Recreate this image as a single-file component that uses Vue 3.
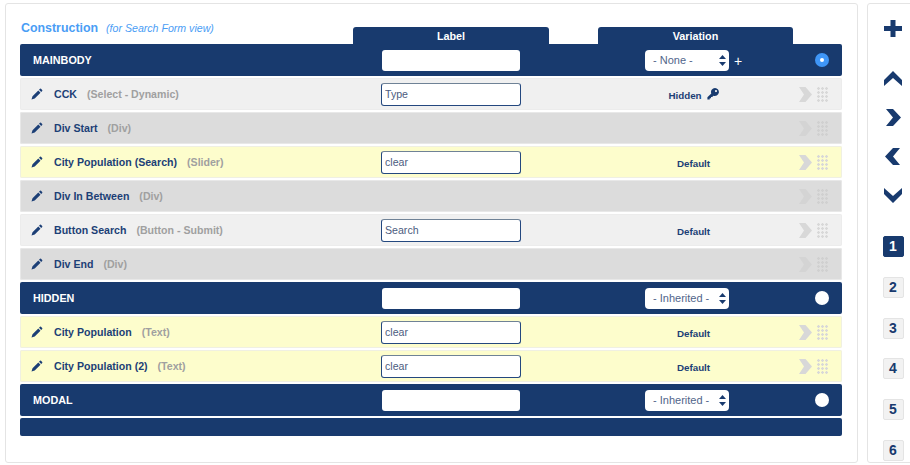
<script setup>
const rows = [
  { type: 'pos', name: 'MAINBODY', select: '- None -', plus: true, active: true },
  { type: 'item', tone: 'grey', name: 'CCK', kind: '(Select - Dynamic)', label: 'Type', variation: 'Hidden', key: true },
  { type: 'item', tone: 'div', name: 'Div Start', kind: '(Div)' },
  { type: 'item', tone: 'yellow', name: 'City Population (Search)', kind: '(Slider)', label: 'clear', variation: 'Default' },
  { type: 'item', tone: 'div', name: 'Div In Between', kind: '(Div)' },
  { type: 'item', tone: 'grey', name: 'Button Search', kind: '(Button - Submit)', label: 'Search', variation: 'Default' },
  { type: 'item', tone: 'div', name: 'Div End', kind: '(Div)' },
  { type: 'pos', name: 'HIDDEN', select: '- Inherited -' },
  { type: 'item', tone: 'yellow', name: 'City Population', kind: '(Text)', label: 'clear', variation: 'Default' },
  { type: 'item', tone: 'yellow', name: 'City Population (2)', kind: '(Text)', label: 'clear', variation: 'Default' },
  { type: 'pos', name: 'MODAL', select: '- Inherited -' }
]
const pages = [1, 2, 3, 4, 5, 6]
</script>

<template>
  <div class="page">
    <section class="panel">
      <header class="head">
        <div class="title"><strong>Construction</strong><em>(for Search Form view)</em></div>
        <div class="tab">Label</div>
        <div></div>
        <div class="tab">Variation</div>
      </header>
      <div class="list">
        <template v-for="row in rows" :key="row.name">
          <div v-if="row.type === 'pos'" class="row pos">
            <div class="pos-name">{{ row.name }}</div>
            <input class="blank" type="text" />
            <div></div>
            <div class="sel-cell">
              <div class="select">
                <span>{{ row.select }}</span>
                <svg width="7" height="11" viewBox="0 0 7 11"><path d="M3.5 0L7 4H0zM3.5 11L0 7h7z" fill="#183a6e" /></svg>
              </div>
              <span v-if="row.plus" class="plus">+</span>
            </div>
            <div class="end">
              <span class="radio" :class="{ on: row.active }"></span>
            </div>
          </div>
          <div v-else class="row item" :class="row.tone">
            <div class="name">
              <svg class="pencil" width="12" height="12" viewBox="0 0 12 12">
                <path d="M.5 11.500L1.500 8.300 7.300 2.500 9.500 4.700 3.700 10.500zM8 1.800L9 .8q.5-.4 1 0l1.200 1.200q.4.5 0 1L10.200 4z" fill="#1c3f76" />
              </svg>
              <b>{{ row.name }}</b><span>{{ row.kind }}</span>
            </div>
            <input v-if="row.label" class="field" type="text" :value="row.label" />
            <div v-else></div>
            <div></div>
            <div class="variation">
              <template v-if="row.variation">{{ row.variation }}</template>
              <svg v-if="row.key" class="key" width="12" height="12" viewBox="0 0 12 12">
                <path fill-rule="evenodd" d="M8 0a4 4 0 1 1-1.600 7.700L5.200 8.900H4v1.300H2.700v1.300H.4V9.300L4.300 5.500A4 4 0 0 1 8 0zm1 2a1.100 1.100 0 1 0 0 2.200A1.100 1.100 0 0 0 9 2z" fill="#183a6e" />
              </svg>
            </div>
            <div class="end tools">
              <svg class="chev" width="13" height="15" viewBox="0 0 13 15"><path d="M0 0h6.500L13 7.500 6.500 15H0l5-7.500z" /></svg>
              <i class="dots"></i>
            </div>
          </div>
        </template>
        <div class="foot"></div>
      </div>
    </section>

    <aside class="side">
      <svg class="add" width="18" height="17" viewBox="0 0 18 17"><path d="M6.500 0h5v6H18v5h-6.500v6h-5v-6H0V6h6.500z" fill="#183a6e" /></svg>
      <nav class="moves">
        <span class="move"><svg width="18" height="15" viewBox="0 0 18 15"><path d="M9 0l9 9v6L9 7l-9 8V9z" fill="#183a6e" /></svg></span>
        <span class="move"><svg width="16" height="17" viewBox="0 0 16 17"><path d="M1 0h7l8 8.500L8 17H1l7-8.500z" fill="#183a6e" /></svg></span>
        <span class="move"><svg width="16" height="17" viewBox="0 0 16 17"><path d="M15 0H8L0 8.500 8 17h7L8 8.500z" fill="#183a6e" /></svg></span>
        <span class="move"><svg width="18" height="15" viewBox="0 0 18 15"><path d="M0 0l9 8 9-8v6l-9 9-9-9z" fill="#183a6e" /></svg></span>
      </nav>
      <div class="pages">
        <span v-for="p in pages" :key="p" class="num" :class="{ current: p === 1 }">{{ p }}</span>
      </div>
    </aside>
  </div>
</template>

<style>
html, body { margin: 0; background: #fff; }
</style>

<style scoped>
.page {
  display: flex;
  align-items: flex-start;
  gap: 9px;
  width: 910px;
  height: 465px;
  padding: 3px 0 0 5px;
  box-sizing: border-box;
  overflow: hidden;
  font-family: "Liberation Sans", Arial, sans-serif;
  color: #183a6e;
}
.panel {
  flex: none;
  width: 853px;
  height: 460px;
  box-sizing: border-box;
  border: 1px solid #e4e4e4;
  border-radius: 3px;
  padding: 23px 14px 0;
}
.head {
  display: grid;
  grid-template-columns: 333px 196px 49px 195px;
  height: 17px;
}
.title {
  display: flex;
  align-items: baseline;
  gap: 8px;
  margin-top: -7px;
  padding-left: 1px;
  line-height: 16px;
  color: #4a9df5;
}
.title strong { font-size: 12.4px; font-weight: 700; }
.title em { font-size: 10.6px; }
.tab {
  background: #183a6e;
  color: #fff;
  border-radius: 3px 3px 0 0;
  font-size: 10.8px;
  font-weight: 700;
  line-height: 19px;
  text-align: center;
}
.list {
  display: flex;
  flex-direction: column;
  gap: 2px;
  width: 822px;
}
.row {
  display: grid;
  grid-template-columns: 361px 140px 77px 191px 53px;
  align-items: center;
  height: 32px;
  border-radius: 2px;
}
.pos { background: #183a6e; }
.pos-name {
  padding-left: 13px;
  color: #fff;
  font-size: 10.8px;
  font-weight: 700;
}
.blank {
  justify-self: center;
  width: 138px;
  height: 21px;
  box-sizing: border-box;
  border: 0;
  border-radius: 3px;
  background: #fff;
  padding: 0;
}
.sel-cell {
  display: flex;
  align-items: center;
  gap: 5px;
  padding-left: 47px;
}
.select {
  display: flex;
  align-items: center;
  justify-content: space-between;
  width: 84px;
  height: 21px;
  box-sizing: border-box;
  padding: 0 3px 0 8px;
  border-radius: 4px;
  background: #fff;
  color: #51658a;
  font-size: 11px;
}
.plus {
  color: #fff;
  font-size: 14px;
  line-height: 14px;
  margin-top: 2px;
}
.end {
  display: flex;
  align-items: center;
  justify-content: flex-end;
  padding-right: 13px;
}
.radio {
  width: 14px;
  height: 14px;
  border-radius: 50%;
  background: #fff;
  display: flex;
  align-items: center;
  justify-content: center;
}
.radio.on { background: #3f96f7; }
.radio.on::after {
  content: "";
  width: 4px;
  height: 4px;
  border-radius: 50%;
  background: #fff;
}
.item.grey { background: #f0f0f0; box-shadow: inset 0 0 0 1px #ececec; }
.item.div { background: #dcdcdc; box-shadow: inset 0 0 0 1px #e8e8e8; }
.item.yellow { background: #fdfdcc; box-shadow: inset 0 0 0 1px #f0f0e2; }
.name {
  display: flex;
  align-items: center;
  padding-left: 11px;
  font-size: 10.6px;
  font-weight: 700;
}
.pencil { margin-right: 11px; margin-top: -1px; flex: none; }
.name b { color: #1c3f76; }
.name span { color: #a0a0a0; margin-left: 10px; }
.field {
  width: 140px;
  height: 23px;
  box-sizing: border-box;
  border: 1px solid #24487f;
  border-top-color: #6f8296;
  border-radius: 3px;
  background: #fff;
  padding: 0 3px;
  font: 10.6px "Liberation Sans", Arial, sans-serif;
  color: #4c5c80;
}
.variation {
  display: flex;
  align-items: center;
  justify-content: center;
  gap: 5px;
  padding-top: 2px;
  font-size: 9.8px;
  font-weight: 700;
  color: #1c3f76;
}
.key { margin-top: -3px; }
.tools { gap: 5px; padding-right: 14px; }
.chev { fill: #d8d8d8; }
.dots {
  display: block;
  width: 11px;
  height: 15px;
  background-image: radial-gradient(circle at 1.5px 1.5px, #d8d8d8 1.1px, transparent 1.5px);
  background-size: 4px 4px;
}
.item.div .chev { fill: #d4d4d4; }
.item.div .dots {
  background-image: radial-gradient(circle at 1.5px 1.5px, #d0d0d0 1.1px, transparent 1.5px);
}
.foot {
  height: 18px;
  background: #183a6e;
  border-radius: 2px;
}
.side {
  flex: none;
  width: 52px;
  height: 460px;
  box-sizing: border-box;
  border: 1px solid #e4e4e4;
  border-radius: 3px;
  padding-top: 16px;
  display: flex;
  flex-direction: column;
  align-items: center;
}
.add { flex: none; }
.moves {
  display: flex;
  flex-direction: column;
  margin-top: 22px;
}
.move {
  display: flex;
  align-items: center;
  justify-content: center;
  height: 39px;
}
.pages {
  display: flex;
  flex-direction: column;
  gap: 19.8px;
  margin-top: 21px;
}
.num {
  width: 21px;
  height: 21px;
  box-sizing: border-box;
  border: 1px solid #e4e4e4;
  border-radius: 2px;
  background: #f2f2f2;
  color: #183a6e;
  font-size: 14px;
  font-weight: 700;
  line-height: 19px;
  text-align: center;
}
.num.current {
  background: #183a6e;
  border-color: #183a6e;
  color: #fff;
}
</style>
